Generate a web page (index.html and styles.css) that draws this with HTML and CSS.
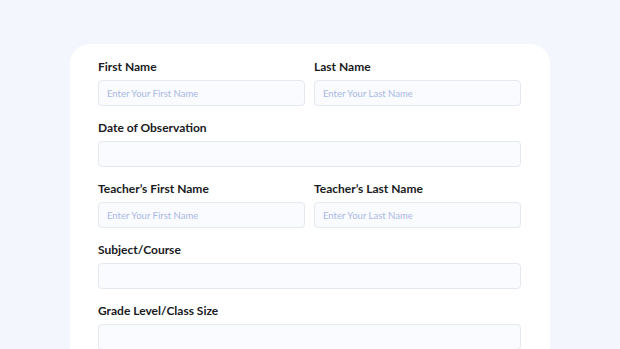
FILE: index.html
```html
<!DOCTYPE html>
<html lang="en">
<head>
    <meta charset="UTF-8">
    <meta name="viewport" content="width=device-width, initial-scale=1.0">
    <title>Observation Form</title>
    <link rel="stylesheet" href="styles.css">
</head>
<body>

    <div class="card">
        <div class="row two">
            <div class="field">
                <label for="firstName">First Name</label>
                <input type="text" id="firstName" placeholder="Enter Your First Name">
            </div>
            <div class="field">
                <label for="lastName">Last Name</label>
                <input type="text" id="lastName" placeholder="Enter Your Last Name">
            </div>
        </div>

        <div class="field">
            <label for="observationDate">Date of Observation</label>
            <input type="text" id="observationDate">
        </div>

        <div class="row two">
            <div class="field">
                <label for="teacherFirst">Teacher’s First Name</label>
                <input type="text" id="teacherFirst" placeholder="Enter Your First Name">
            </div>
            <div class="field">
                <label for="teacherLast">Teacher’s Last Name</label>
                <input type="text" id="teacherLast" placeholder="Enter Your Last Name">
            </div>
        </div>

        <div class="field">
            <label for="subject">Subject/Course</label>
            <input type="text" id="subject">
        </div>

        <div class="field">
            <label for="grade">Grade Level/Class Size</label>
            <input type="text" id="grade">
        </div>
    </div>

</body>
</html>
```

FILE: styles.css
```css
body {
    font-family: 'Lato', 'Inter', sans-serif;
    background-color: #f4f6fd;
    color: #1c1c24;
    margin: 0;
    padding: 44px 70px 0 70px;
    height: 349px;
    box-sizing: border-box;
    overflow: hidden;
}
.card {
    background-color: #ffffff;
    border-radius: 20px 20px 0 0;
    padding: 16px 29px 0 28px;
    height: 320px;
    box-sizing: border-box;
}
.row.two {
    display: grid;
    grid-template-columns: 1fr 1fr;
    column-gap: 9px;
}
.field {
    display: flex;
    flex-direction: column;
    margin-bottom: 15px;
}
.field label {
    font-size: 12px;
    line-height: 14px;
    font-weight: 700;
    color: #1a1a22;
    margin-bottom: 6px;
}
.field input {
    height: 26px;
    box-sizing: border-box;
    border: 1px solid #e3e8f1;
    border-radius: 4px;
    background-color: #f9fbfe;
    padding: 0 8px;
    font-family: 'Lato', sans-serif;
    font-size: 9.5px;
    outline: none;
}
.field input::placeholder {
    color: #aab8e4;
}
```
